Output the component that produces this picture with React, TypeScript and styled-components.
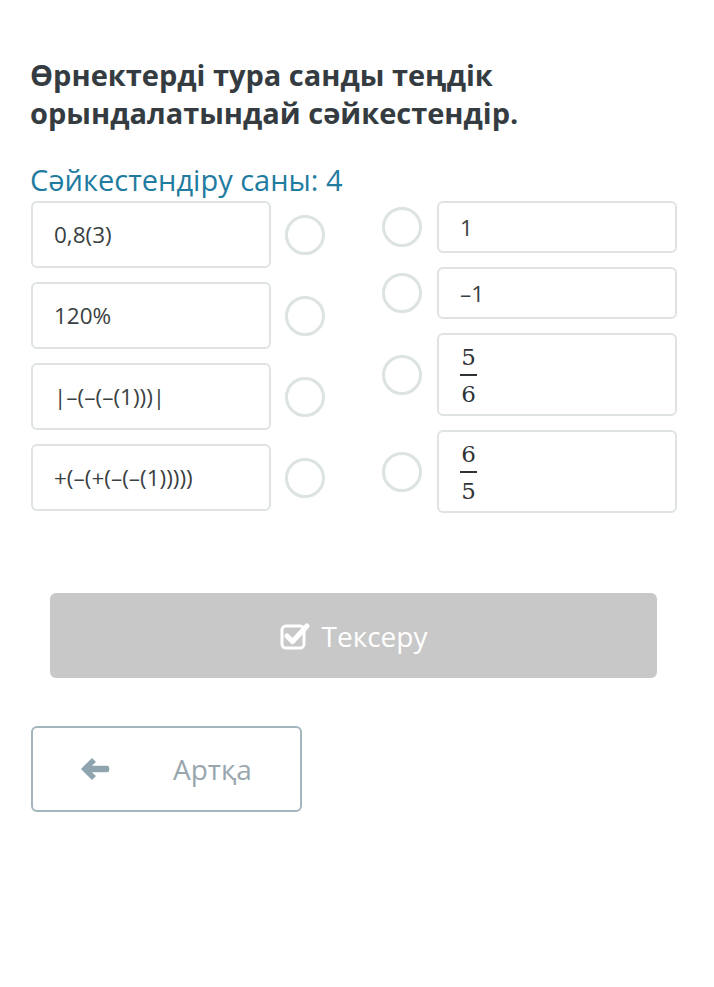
import React from 'react';
import styled, {createGlobalStyle} from 'styled-components';

const GlobalStyle = createGlobalStyle`
  html, body {
    margin: 0;
    padding: 0;
    background: #ffffff;
  }
  body {
    font-family: "Open Sans", "Noto Sans", sans-serif;
  }
`;

const Page = styled.div`
  width: 714px;
  min-height: 987px;
  box-sizing: border-box;
  padding: 56px 37px 0 30px;
`;

const Title = styled.h1`
  margin: 0;
  font-size: 29px;
  line-height: 38px;
  font-weight: 700;
  color: #353c41;
`;

const Counter = styled.div`
  margin-top: 30px;
  font-size: 29px;
  line-height: 36px;
  color: #1f7ca0;
`;

const Board = styled.div`
  display: flex;
  justify-content: space-between;
  margin-top: 3px;
  padding-left: 1px;
`;

const Column = styled.div`
  display: flex;
  flex-direction: column;
  gap: 14px;
`;

const Row = styled.div<{ $reverse?: boolean }>`
  display: flex;
  align-items: center;
  gap: ${p => (p.$reverse ? '15px' : '14px')};
  flex-direction: ${p => (p.$reverse ? 'row-reverse' : 'row')};
`;

const Card = styled.div<{ $h: number }>`
  width: 240px;
  height: ${p => p.$h}px;
  box-sizing: border-box;
  border: 2px solid #dfe3e3;
  border-radius: 6px;
  background: #fff;
  display: flex;
  align-items: center;
  padding-left: 21px;
  font-size: 22.5px;
  color: #3a3f42;
`;

const Dot = styled.div`
  width: 40px;
  height: 40px;
  box-sizing: border-box;
  border: 3px solid #dde2e2;
  border-radius: 50%;
`;

const Frac = styled.span`
  display: inline-flex;
  flex-direction: column;
  align-items: center;
  font-family: "DejaVu Serif", "Liberation Serif", serif;
  font-size: 23px;
  line-height: 26px;
  color: #2f3336;
  margin-top: 2px;

  > i {
    font-style: normal;
    display: block;
    width: 17px;
    height: 2px;
    background: #2f3336;
    margin: 4px 0 5px;
  }
`;

const CheckButton = styled.button`
  display: flex;
  align-items: center;
  justify-content: center;
  gap: 12px;
  width: 607px;
  height: 85px;
  margin: 80px 0 0 20px;
  border: none;
  border-radius: 6px;
  background: #c8c8c8;
  color: #ffffff;
  font-family: inherit;
  font-size: 28px;
`;

const BackButton = styled.button`
  display: flex;
  align-items: center;
  width: 271px;
  height: 86px;
  margin: 48px 0 0 1px;
  box-sizing: border-box;
  padding: 0 0 0 47px;
  border: 2px solid #a3b5bd;
  border-radius: 6px;
  background: #fff;
  color: #98a7ae;
  font-family: inherit;
  font-size: 28px;

  > span {
    margin-left: 63px;
  }
`;

const CheckIcon = () => (
  <svg width="30" height="28" viewBox="0 0 30 28">
    <rect x="2" y="4" width="22" height="22" rx="4" fill="none" stroke="#fff" strokeWidth="3"/>
    <path d="M7 14 L12.5 19.5 L27 4" fill="none" stroke="#fff" strokeWidth="5" strokeLinecap="round"
          strokeLinejoin="round"/>
  </svg>
);

const ArrowIcon = () => (
  <svg width="30" height="24" viewBox="0 0 30 24">
    <path d="M12 2 L2 12 L12 22 L15 19 L10 14.5 H27 Q28.5 14.5 28.5 13 V11 Q28.5 9.5 27 9.5 H10 L15 5 Z"
          fill="#8ea4ae" stroke="#8ea4ae" strokeWidth="1.5" strokeLinejoin="round"/>
  </svg>
);

const left = ['0,8(3)', '120%', '|–(–(–(1)))|', '+(–(+(–(–(1)))))'];

const right: { h: number; node: React.ReactNode }[] = [
  {h: 52, node: '1'},
  {h: 52, node: '–1'},
  {h: 83, node: <Frac>5<i/>6</Frac>},
  {h: 83, node: <Frac>6<i/>5</Frac>},
];

export default function App() {
  return (
    <Page>
      <GlobalStyle/>
      <Title>Өрнектерді тура санды теңдік орындалатындай сәйкестендір.</Title>
      <Counter>Сәйкестендіру саны: 4</Counter>
      <Board>
        <Column>
          {left.map(t => (
            <Row key={t}>
              <Card $h={67}>{t}</Card>
              <Dot/>
            </Row>
          ))}
        </Column>
        <Column>
          {right.map((r, i) => (
            <Row key={i} $reverse>
              <Card $h={r.h}>{r.node}</Card>
              <Dot/>
            </Row>
          ))}
        </Column>
      </Board>
      <CheckButton><CheckIcon/>Тексеру</CheckButton>
      <BackButton><ArrowIcon/><span>Артқа</span></BackButton>
    </Page>
  );
}
